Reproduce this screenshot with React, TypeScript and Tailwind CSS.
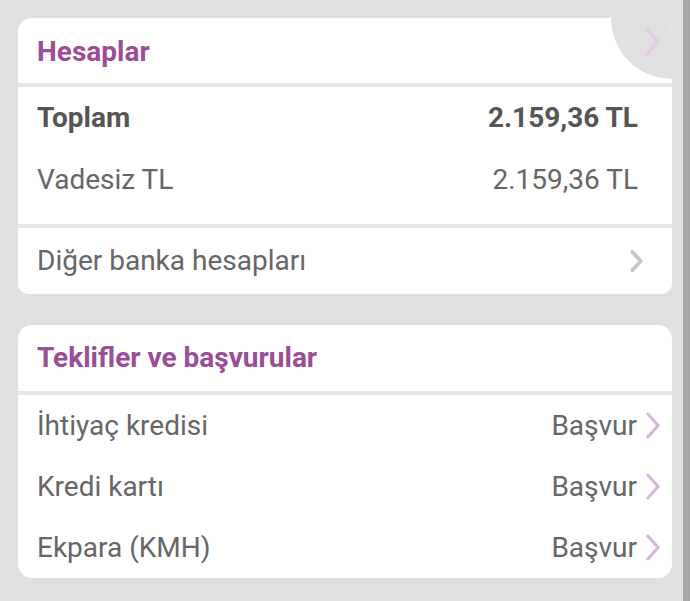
import React from 'react';

const Chevron: React.FC<{ className?: string; stroke?: number }> = ({ className, stroke = 3 }) => (
  <svg viewBox="0 0 16 26" className={className} fill="none">
    <path d="M3 2 L13 13 L3 24" stroke="currentColor" strokeWidth={stroke} strokeLinecap="round" strokeLinejoin="round" />
  </svg>
);

const Divider = () => <div className="h-[4px] bg-[#e6e6e6]" />;

const OfferRow: React.FC<{ label: string }> = ({ label }) => (
  <div className="h-[61px] flex items-center justify-between pl-[19px] pr-[10px]">
    <span>{label}</span>
    <span className="flex items-center gap-[7px]">
      Başvur
      <Chevron className="w-[18px] h-[27px] text-[#d6b6da]" />
    </span>
  </div>
);

export default function App() {
  return (
    <div
      className="relative w-[690px] h-[601px] bg-[#e0e0e0] overflow-hidden pt-[18px] pl-[18px] text-[28px] text-[#666666]"
      style={{ fontFamily: 'Roboto, "Noto Sans", sans-serif' }}
    >
      {/* scrollbar */}
      <div className="absolute right-0 top-0 w-[7px] h-full bg-[#a6a6a6]" />

      {/* HESAPLAR */}
      <div className="relative w-[654px] bg-white rounded-t-[14px] rounded-b-[10px] overflow-hidden">
        <div className="h-[65px] flex items-center pl-[19px] pt-[2px] font-bold text-[#9b4d96]">Hesaplar</div>
        <div className="absolute right-[-61px] top-[-61px] w-[122px] h-[122px] rounded-full bg-[#e0e0e0]" />
        <Chevron className="absolute right-[10px] top-[9px] w-[19px] h-[29px] text-[#e6cbe8]" />
        <Divider />
        <div className="pb-[13px]">
          <div className="h-[62px] flex items-center justify-between pl-[19px] pr-[34px] font-bold text-[#555555]">
            <span>Toplam</span>
            <span>2.159,36 TL</span>
          </div>
          <div className="h-[62px] flex items-center justify-between pl-[19px] pr-[34px]">
            <span>Vadesiz TL</span>
            <span>2.159,36 TL</span>
          </div>
        </div>
        <Divider />
        <div className="h-[66px] flex items-center justify-between pl-[19px] pr-[27px]">
          <span>Diğer banka hesapları</span>
          <Chevron className="w-[17px] h-[22px] text-[#c6c6c6]" stroke={4.5} />
        </div>
      </div>

      {/* TEKLIFLER */}
      <div className="mt-[31px] w-[654px] bg-white rounded-[14px] overflow-hidden">
        <div className="h-[66px] flex items-center pl-[19px] font-bold text-[#9b4d96]">Teklifler ve başvurular</div>
        <Divider />
        <OfferRow label="İhtiyaç kredisi" />
        <OfferRow label="Kredi kartı" />
        <OfferRow label="Ekpara (KMH)" />
      </div>
    </div>
  );
}
